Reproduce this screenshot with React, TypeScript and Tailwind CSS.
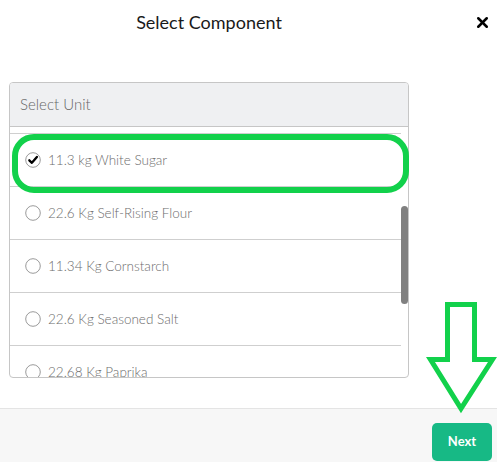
import { X } from "lucide-react";

const UNITS = [
  "22.6 Kg All-Purpose Flour",
  "11.34 Kg Garlic Powder",
  "22.6 Kg Brown Sugar",
  "11.3 Kg Onion Powder",
  "11.3 kg White Sugar",
  "22.6 Kg Self-Rising Flour",
  "11.34 Kg Cornstarch",
  "22.6 Kg Seasoned Salt",
  "22.68 Kg Paprika",
  "11.34 Kg Black Pepper",
  "22.6 Kg Bread Crumbs",
  "11.3 Kg Baking Soda",
];

const SELECTED = 4;

function Radio({ checked }: { checked: boolean }) {
  return (
    <svg width="16" height="16" viewBox="0 0 16 16" className="shrink-0">
      <circle cx="8" cy="8" r="7.3" fill="#fff" stroke="#9a9a9a" strokeWidth="1" />
      {checked && (
        <path
          d="M4.3 8.3 L6.9 10.8 L11.9 4.9"
          fill="none"
          stroke="#000"
          strokeWidth="2.3"
          strokeLinecap="round"
          strokeLinejoin="round"
        />
      )}
    </svg>
  );
}

export default function App() {
  return (
    <div className="relative h-[462px] w-[497px] overflow-hidden bg-white font-['Lato',sans-serif]">
      {/* header */}
      <div className="flex h-[44px] items-center">
        <h2 className="w-[418px] text-center text-[18px] font-normal text-[#1a1a1a]">
          Select Component
        </h2>
        <button className="ml-auto mr-[6px] text-black">
          <X size={17} strokeWidth={3.6} />
        </button>
      </div>

      {/* unit picker */}
      <div className="ml-[9px] mt-[38px] w-[400px] overflow-hidden rounded-[4px] border border-[#c6c6c6]">
        <div className="flex h-[44px] items-center border-b border-[#c6c6c6] bg-[#eff0f2] pl-[10px] text-[15px] font-light text-[#666]">
          Select Unit
        </div>
        <div className="flex h-[250px]">
          <div
            ref={(el) => {
              if (el) el.scrollTop = 205;
            }}
            className="h-full flex-1 overflow-hidden"
          >
            {UNITS.map((u, i) => (
              <label
                key={u}
                className="flex h-[53px] items-center gap-[7px] border-b border-[#cfcfcf] pl-[15px] text-[13.5px] font-light text-[#6c6c6c]"
              >
                <Radio checked={i === SELECTED} />
                <span>{u}</span>
              </label>
            ))}
          </div>
          {/* scrollbar */}
          <div className="w-[7px] shrink-0">
            <div className="mt-[79px] h-[98px] rounded-full bg-[#808080]" />
          </div>
        </div>
      </div>

      {/* footer */}
      <div className="mt-[30px] flex h-[54px] border-t border-[#e4e4e4] bg-[#f7f7f7] pt-[14px]">
        <button className="ml-auto mr-[5px] h-[38px] w-[60px] rounded-[5px] bg-[#17b985] text-[13px] font-bold text-white">
          Next
        </button>
      </div>

      {/* annotation: highlight */}
      <div className="pointer-events-none absolute left-[12px] top-[134px] h-[59px] w-[397px] rounded-[22px] border-[6px] border-[#12d14b]" />

      {/* annotation: arrow */}
      <svg
        className="pointer-events-none absolute left-[425px] top-[299px]"
        width="72"
        height="116"
        viewBox="0 0 72 116"
      >
        <polygon
          points="22.5,5.5 49.5,5.5 49.5,60.5 67.5,60.5 36,109.5 5.5,60.5 22.5,60.5"
          fill="#fff"
          stroke="#12d14b"
          strokeWidth="5"
          strokeLinejoin="miter"
        />
      </svg>
    </div>
  );
}
